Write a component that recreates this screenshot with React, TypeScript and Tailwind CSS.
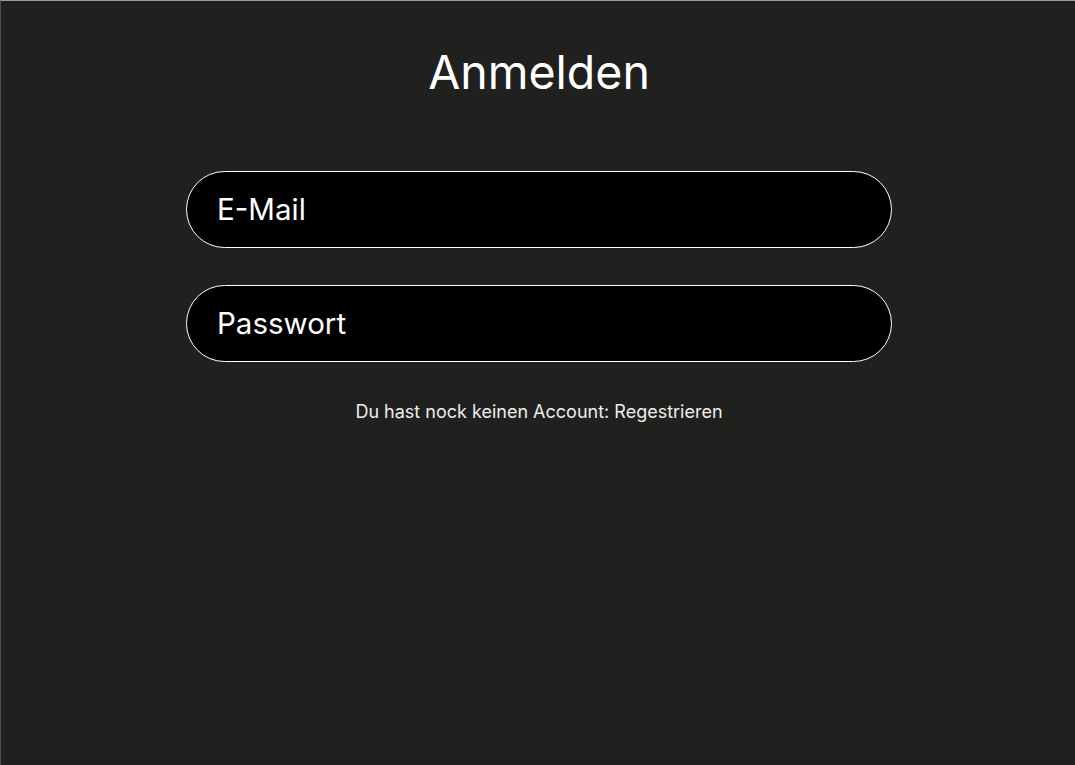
export default function App() {
  return (
    <div
      className="w-full h-[765px] bg-[#20201f] border-t border-t-[#9c9c9c] border-l border-l-[#4d4d4d] pl-[2px] flex flex-col items-center text-white"
      style={{ fontFamily: "Inter, 'Noto Sans', sans-serif" }}
    >
      <h1 className="mt-[48px] text-[46.5px] leading-none font-normal">Anmelden</h1>

      <form className="mt-[75px] flex flex-col gap-[37px] w-[706px]" onSubmit={(e) => e.preventDefault()}>
        <input
          type="email"
          placeholder="E-Mail"
          className="h-[77px] w-full rounded-full border-[1.5px] border-white bg-black pl-[30px] pr-8 text-[29.5px] text-white placeholder:text-white outline-none"
        />
        <input
          type="password"
          placeholder="Passwort"
          className="h-[77px] w-full rounded-full border-[1.5px] border-white bg-black pl-[30px] pr-8 text-[29.5px] text-white placeholder:text-white outline-none"
        />
      </form>

      <p className="mt-[38px] text-[18px] leading-[24px] text-[#ededed]">
        Du hast nock keinen Account: <a className="cursor-pointer">Regestrieren</a>
      </p>
    </div>
  );
}
